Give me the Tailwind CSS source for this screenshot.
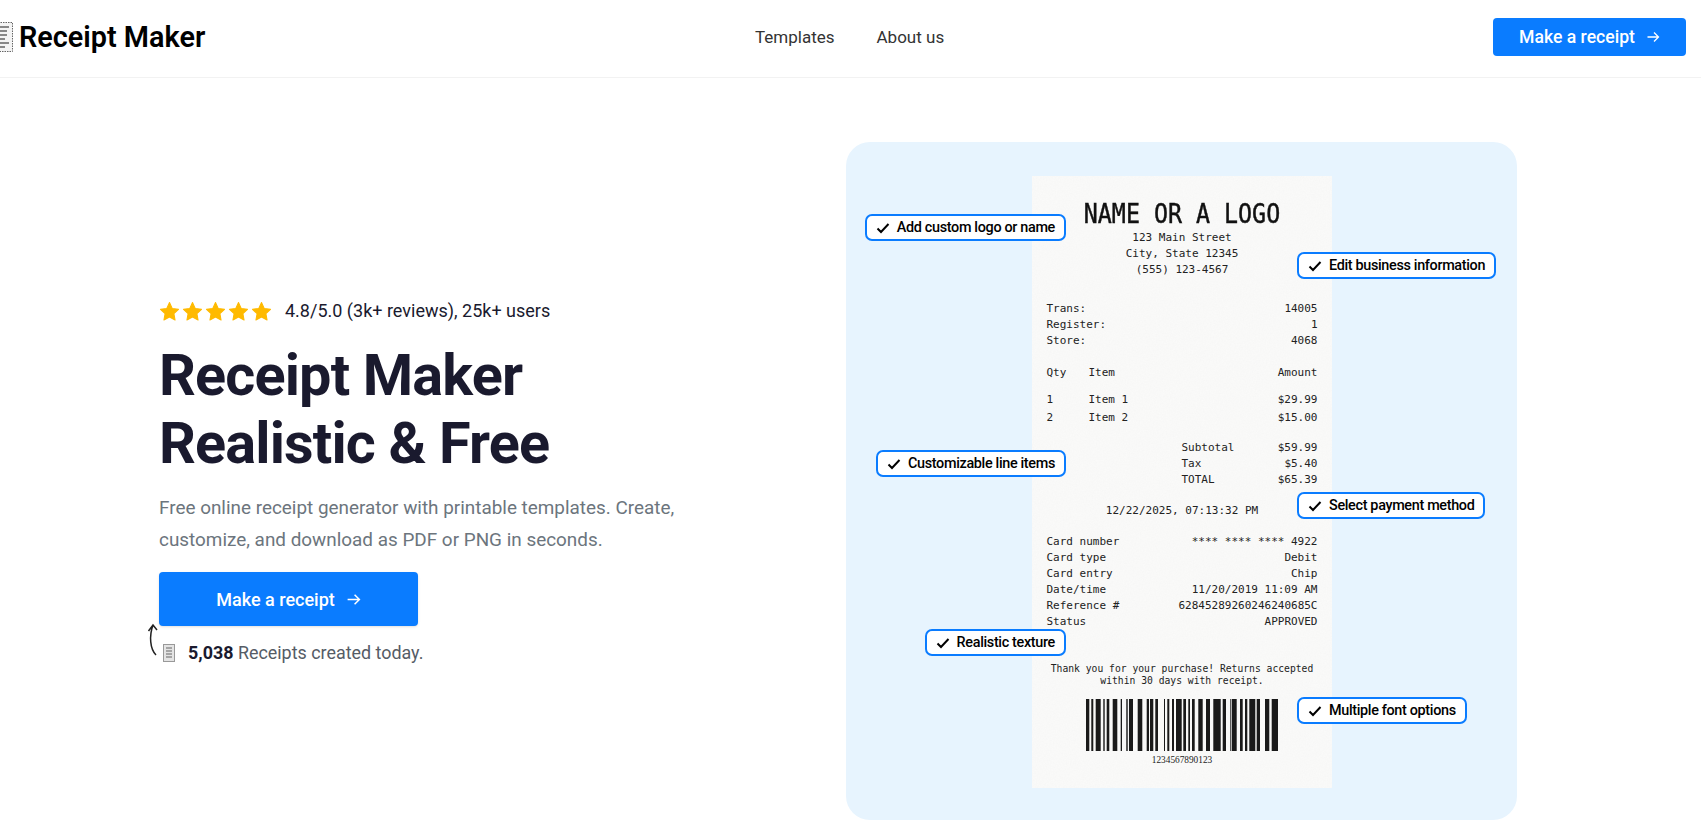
<!DOCTYPE html>
<html lang="en">
<head>
    <meta charset="UTF-8">
    <meta name="viewport" content="width=device-width, initial-scale=1.0">
    <title>Receipt Maker</title>
    <script src="https://cdn.jsdelivr.net/npm/@tailwindcss/browser@4"></script>
</head>
<body class="bg-white font-['Roboto',sans-serif] overflow-hidden h-[837px]">
    <header class="h-[78px] border-b border-[#f2f2f2] flex items-center justify-between pr-[15px] relative">
        <a class="flex items-center gap-[6px] -ml-[15px] mb-[3px]">
            <svg class="w-[28px] h-[30px]" viewBox="0 0 28 30">
                <rect x="0.5" y="0.5" width="27" height="29" fill="#f4f4f4" stroke="#666" stroke-dasharray="1.5 1"/>
                <path d="M4 5h20M6 9h16M4 13h18M6 17h14M4 21h20M8 25h12" stroke="#888" stroke-width="2"/>
            </svg>
            <span class="text-[28.8px] font-semibold text-black leading-none">Receipt Maker</span>
        </a>
        <nav class="absolute left-[755px] top-[25px] flex gap-[42px] text-[17px] text-[#333] leading-[24px]">
            <a>Templates</a>
            <a>About us</a>
        </nav>
        <button class="w-[193px] h-[38px] mb-[3px] bg-[#0a7cff] rounded-[4px] text-white text-[17.6px] font-medium flex items-center justify-center gap-[11px]">
            Make a receipt
            <svg class="w-[14px] h-[14px]" viewBox="0 0 14 14" fill="none" stroke="#fff" stroke-width="1.3"><path d="M1.5 7h11M8 2.5 12.5 7 8 11.5"/></svg>
        </button>
    </header>

    <main class="flex">
        <section class="w-[846px] h-[742px] pl-[159px] pt-[221px]">
            <div class="flex items-center gap-[13px] h-[24px]">
                <div class="flex gap-[2px] text-[#ffba00]">
                    <svg class="w-[21px] h-[21px]" viewBox="0 0 20 20" fill="currentColor" stroke="currentColor" stroke-width="1" stroke-linejoin="round"><path d="M10 1.5l2.6 5.6 6 .8-4.4 4.2 1.1 6L10 15.2l-5.3 2.9 1.1-6L1.4 7.9l6-.8z"/></svg>
                    <svg class="w-[21px] h-[21px]" viewBox="0 0 20 20" fill="currentColor" stroke="currentColor" stroke-width="1" stroke-linejoin="round"><path d="M10 1.5l2.6 5.6 6 .8-4.4 4.2 1.1 6L10 15.2l-5.3 2.9 1.1-6L1.4 7.9l6-.8z"/></svg>
                    <svg class="w-[21px] h-[21px]" viewBox="0 0 20 20" fill="currentColor" stroke="currentColor" stroke-width="1" stroke-linejoin="round"><path d="M10 1.5l2.6 5.6 6 .8-4.4 4.2 1.1 6L10 15.2l-5.3 2.9 1.1-6L1.4 7.9l6-.8z"/></svg>
                    <svg class="w-[21px] h-[21px]" viewBox="0 0 20 20" fill="currentColor" stroke="currentColor" stroke-width="1" stroke-linejoin="round"><path d="M10 1.5l2.6 5.6 6 .8-4.4 4.2 1.1 6L10 15.2l-5.3 2.9 1.1-6L1.4 7.9l6-.8z"/></svg>
                    <svg class="w-[21px] h-[21px]" viewBox="0 0 20 20" fill="currentColor" stroke="currentColor" stroke-width="1" stroke-linejoin="round"><path d="M10 1.5l2.6 5.6 6 .8-4.4 4.2 1.1 6L10 15.2l-5.3 2.9 1.1-6L1.4 7.9l6-.8z"/></svg>
                </div>
                <span class="text-[18px] text-[#1a1a2e] leading-[24px]">4.8/5.0 (3k+ reviews), 25k+ users</span>
            </div>
            <h1 class="mt-[19px] text-[57.6px] leading-[68px] font-bold text-[#1a1a2e] tracking-[-0.85px]">Receipt Maker<br>Realistic &amp; Free</h1>
            <p class="mt-[14px] text-[18.9px] leading-[32px] text-[#6c757d] w-[520px]">Free online receipt generator with printable templates. Create, customize, and download as PDF or PNG in seconds.</p>
            <button class="mt-[16px] w-[259px] h-[54px] bg-[#0a7cff] rounded-[4px] text-white text-[18px] font-medium flex items-center justify-center gap-[11px] shadow-sm">
                Make a receipt
                <svg class="w-[15px] h-[15px]" viewBox="0 0 14 14" fill="none" stroke="#fff" stroke-width="1.4"><path d="M1.5 7h11M8 2.5 12.5 7 8 11.5"/></svg>
            </button>
            <div class="mt-[15px] flex items-center h-[24px] relative">
                <svg class="absolute -left-[13px] -top-[19px] w-[14px] h-[36px]" viewBox="0 0 14 36" fill="none" stroke="#222" stroke-width="1.5"><path d="M10 33C4 27 3 14 7 3M2.5 9 7 3l4 5"/></svg>
                <svg class="ml-[4px] w-[12px] h-[18px]" viewBox="0 0 12 18">
                    <rect x="0.5" y="0.5" width="11" height="17" fill="#e4e4e4" stroke="#999"/>
                    <path d="M3 4h6M3 7h6M3 10h6M3 13h6" stroke="#666"/>
                </svg>
                <span class="ml-[13px] text-[17.9px] leading-[24px] text-[#555c66]"><b class="font-bold text-[#1a1a2e]">5,038</b> Receipts created today.</span>
            </div>
        </section>

        <section class="relative mt-[64px] w-[671px] h-[678px] bg-[#e7f4fe] rounded-[24px] pt-[34px]">
            <div class="relative mx-auto w-[300px] h-[612px] bg-[#fbfbfa] pt-[23px] pl-[15px] pr-[14px] font-['DejaVu_Sans_Mono',monospace] text-[11px] leading-[16px] text-[#222]">
                <svg class="absolute inset-0 w-[300px] h-[612px] pointer-events-none">
                    <filter id="paper"><feTurbulence type="fractalNoise" baseFrequency="0.7" numOctaves="2"/><feColorMatrix values="0 0 0 0 0.4  0 0 0 0 0.4  0 0 0 0 0.4  0 0 0 0.06 0"/></filter>
                    <rect width="300" height="612" filter="url(#paper)"/>
                </svg>
                <div class="relative">
                    <div class="text-center text-[23.3px] leading-[30px] text-[#111] whitespace-nowrap scale-y-115 [-webkit-text-stroke:0.4px_#111]">NAME OR A LOGO</div>
                    <div class="mt-[1px] text-center">123 Main Street<br>City, State 12345<br>(555) 123-4567</div>
                    <div class="mt-[23px] flex justify-between"><span>Trans:</span><span>14005</span></div>
                    <div class="flex justify-between"><span>Register:</span><span>1</span></div>
                    <div class="flex justify-between"><span>Store:</span><span>4068</span></div>
                    <div class="mt-[16px] flex"><span class="w-[42px]">Qty</span><span>Item</span><span class="ml-auto">Amount</span></div>
                    <div class="mt-[10px] flex leading-[18px]"><span class="w-[42px]">1</span><span>Item 1</span><span class="ml-auto">$29.99</span></div>
                    <div class="flex leading-[18px]"><span class="w-[42px]">2</span><span>Item 2</span><span class="ml-auto">$15.00</span></div>
                    <div class="mt-[13px] ml-[135px] flex justify-between"><span>Subtotal</span><span>$59.99</span></div>
                    <div class="ml-[135px] flex justify-between"><span>Tax</span><span>$5.40</span></div>
                    <div class="ml-[135px] flex justify-between"><span>TOTAL</span><span>$65.39</span></div>
                    <div class="mt-[15px] text-center">12/22/2025, 07:13:32 PM</div>
                    <div class="mt-[15px] flex justify-between"><span>Card number</span><span>**** **** **** 4922</span></div>
                    <div class="flex justify-between"><span>Card type</span><span>Debit</span></div>
                    <div class="flex justify-between"><span>Card entry</span><span>Chip</span></div>
                    <div class="flex justify-between"><span>Date/time</span><span>11/20/2019 11:09 AM</span></div>
                    <div class="flex justify-between"><span>Reference #</span><span>62845289260246240685C</span></div>
                    <div class="flex justify-between"><span>Status</span><span>APPROVED</span></div>
                    <div class="mt-[33px] -mx-[4px] text-center text-[9.7px] leading-[12px] whitespace-nowrap">Thank you for your purchase! Returns accepted<br>within 30 days with receipt.</div>
                    <svg class="mt-[12px] ml-[39px] w-[192px] h-[52px]" viewBox="0 0 192 52" fill="#1a1a1a">
                        <path d="M0 0h3.300v52H0zM5.300 0h2v52h-2zM9.700 0h5v52h-5zM17.300 0h1.400v52h-1.400zM20.700 0h2.600v52h-2.600zM26.700 0h4.600v52h-4.600zM34.700 0h1.300v52h-1.300zM40.300 0h1.400v52h-1.400zM43 0h4v52h-4zM51.700 0h4.600v52h-4.600zM60.700 0h2.300v52h-2.300zM64 0h3.300v52H64zM69.300 0h2.700v52h-2.700zM78 0h1v52h-1zM81.300 0h2v52h-2zM86 0h2v52h-2zM90 0h5.700v52H90zM97.300 0h2.700v52h-2.700zM102.300 0h1.700v52h-1.700zM106 0h2.700v52H106zM112.300 0h4.400v52h-4.400zM120 0h4v52h-4zM127.300 0h7.400v52h-7.400zM136.700 0h3.300v52h-3.300zM144 0h.7v52h-.7zM145.700 0h5v52h-5zM154 0h2.700v52H154zM159 0h2.300v52H159zM163.300 0h6v52h-6zM170.700 0h3.300v52h-3.300zM179 0h4.300v52H179zM185.700 0h6.300v52h-6.300z"/>
                    </svg>
                    <div class="mt-[3px] text-center font-['Liberation_Serif',serif] text-[9.3px] leading-[12px]">1234567890123</div>
                </div>
            </div>

            <div class="absolute right-[451px] top-[72px] h-[27px] pl-[9px] pr-[9px] gap-[7px] flex items-center bg-white border-2 border-[#0a7cff] rounded-[7px] text-[14.4px] font-medium text-black tracking-[-0.33px] whitespace-nowrap">
                <svg class="w-[14px] h-[14px]" viewBox="0 0 14 14" fill="none" stroke="#000" stroke-width="2"><path d="M1.5 7.5 5 11l7.5-8"/></svg>Add custom logo or name
            </div>
            <div class="absolute left-[451px] top-[110px] h-[27px] pl-[9px] pr-[9px] gap-[7px] flex items-center bg-white border-2 border-[#0a7cff] rounded-[7px] text-[14.4px] font-medium text-black tracking-[-0.33px] whitespace-nowrap">
                <svg class="w-[14px] h-[14px]" viewBox="0 0 14 14" fill="none" stroke="#000" stroke-width="2"><path d="M1.5 7.5 5 11l7.5-8"/></svg>Edit business information
            </div>
            <div class="absolute right-[451px] top-[308px] h-[27px] pl-[9px] pr-[9px] gap-[7px] flex items-center bg-white border-2 border-[#0a7cff] rounded-[7px] text-[14.4px] font-medium text-black tracking-[-0.33px] whitespace-nowrap">
                <svg class="w-[14px] h-[14px]" viewBox="0 0 14 14" fill="none" stroke="#000" stroke-width="2"><path d="M1.5 7.5 5 11l7.5-8"/></svg>Customizable line items
            </div>
            <div class="absolute left-[451px] top-[350px] h-[27px] pl-[9px] pr-[9px] gap-[7px] flex items-center bg-white border-2 border-[#0a7cff] rounded-[7px] text-[14.4px] font-medium text-black tracking-[-0.33px] whitespace-nowrap">
                <svg class="w-[14px] h-[14px]" viewBox="0 0 14 14" fill="none" stroke="#000" stroke-width="2"><path d="M1.5 7.5 5 11l7.5-8"/></svg>Select payment method
            </div>
            <div class="absolute right-[451px] top-[487px] h-[27px] pl-[9px] pr-[9px] gap-[7px] flex items-center bg-white border-2 border-[#0a7cff] rounded-[7px] text-[14.4px] font-medium text-black tracking-[-0.33px] whitespace-nowrap">
                <svg class="w-[14px] h-[14px]" viewBox="0 0 14 14" fill="none" stroke="#000" stroke-width="2"><path d="M1.5 7.5 5 11l7.5-8"/></svg>Realistic texture
            </div>
            <div class="absolute left-[451px] top-[555px] h-[27px] pl-[9px] pr-[9px] gap-[7px] flex items-center bg-white border-2 border-[#0a7cff] rounded-[7px] text-[14.4px] font-medium text-black tracking-[-0.33px] whitespace-nowrap">
                <svg class="w-[14px] h-[14px]" viewBox="0 0 14 14" fill="none" stroke="#000" stroke-width="2"><path d="M1.5 7.5 5 11l7.5-8"/></svg>Multiple font options
            </div>
        </section>
    </main>
</body>
</html>
